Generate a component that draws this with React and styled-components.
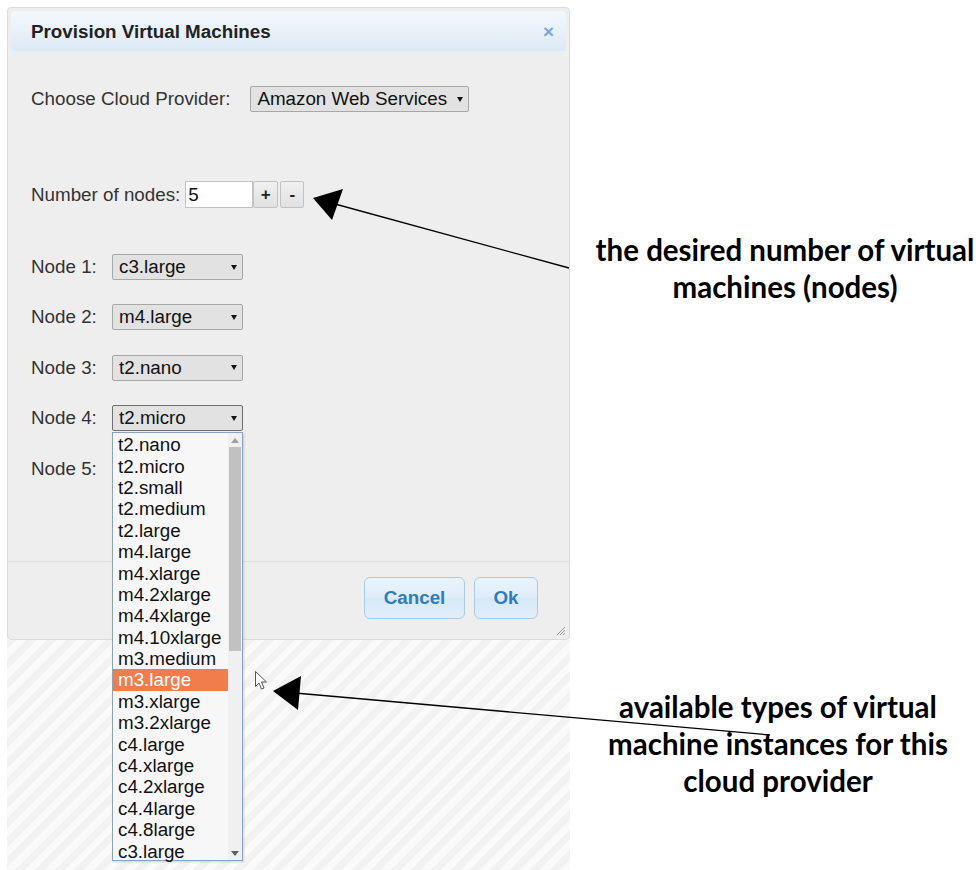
import React from "react";
import styled, { createGlobalStyle } from "styled-components";

const GlobalStyle = createGlobalStyle`
  html, body {
    margin: 0;
    padding: 0;
    background: #ffffff;
  }
  body {
    font-family: "Liberation Sans", Arial, sans-serif;
    color: #333;
  }
`;

const Page = styled.div`
  position: relative;
  display: flex;
  width: 980px;
  height: 870px;
  overflow: hidden;
`;

const LeftColumn = styled.div`
  display: flex;
  flex-direction: column;
  width: 563px;
  margin-left: 7px;
`;

const Dialog = styled.div`
  position: relative;
  box-sizing: border-box;
  display: flex;
  flex-direction: column;
  height: 633px;
  margin-top: 7px;
  border: 1px solid #dcdcdc;
  border-radius: 4px;
  background: #eeeeee;
`;

const Header = styled.div`
  display: flex;
  align-items: center;
  justify-content: space-between;
  height: 40px;
  margin: 3px 3px 0;
  padding: 1px 12px 0 20px;
  box-sizing: border-box;
  border-radius: 4px;
  background: linear-gradient(#f4f8fc, #dce9f6);
`;

const Title = styled.h1`
  margin: 0;
  font-size: 18.8px;
  font-weight: bold;
  color: #222;
`;

const Close = styled.span`
  font-size: 19px;
  font-weight: bold;
  color: #7aa6d0;
  line-height: 1;
`;

const Body = styled.div`
  flex: 1;
  display: flex;
  flex-direction: column;
  padding-left: 23px;
`;

const Row = styled.div`
  display: flex;
  align-items: center;
  margin-top: ${(p) => p.$top}px;
  gap: ${(p) => p.$gap || 0}px;
`;

const NodeRows = styled.div`
  display: flex;
  flex-direction: column;
  gap: 24.4px;
  margin-top: 46px;
`;

const Label = styled.span`
  font-size: 18.8px;
  color: #333;
  width: ${(p) => (p.$width ? `${p.$width}px` : "auto")};
  flex: none;
`;

const SelectBox = styled.div`
  position: relative;
  box-sizing: border-box;
  display: flex;
  align-items: center;
  justify-content: space-between;
  width: ${(p) => p.$width}px;
  height: 26px;
  padding: 0 5px 0 6px;
  border: 1px solid ${(p) => (p.$focused ? "#6f6f6f" : "#a7a7a7")};
  border-radius: 2px;
  background: #e2e2e2;
  font-size: 18.8px;
  color: #111;
`;

const Caret = styled.svg`
  width: 6px;
  height: 5px;
  flex: none;
`;

const NumberInput = styled.div`
  box-sizing: border-box;
  display: flex;
  align-items: center;
  width: 68px;
  height: 27px;
  padding-left: 2px;
  border: 1px solid #c4c4c4;
  background: #fff;
  font-size: 18.8px;
  color: #111;
`;

const StepButton = styled.button`
  box-sizing: border-box;
  width: ${(p) => p.$width}px;
  height: 27px;
  margin-left: ${(p) => p.$gap}px;
  padding: 0;
  border: 1px solid #c2c2c2;
  border-radius: 2px;
  background: linear-gradient(#f0f0f0, #e1e1e1);
  font-family: "Liberation Sans", Arial, sans-serif;
  font-size: 17px;
  font-weight: bold;
  color: #222;
`;

const DropList = styled.ul`
  position: absolute;
  top: 26px;
  left: -1px;
  z-index: 5;
  box-sizing: border-box;
  width: 131px;
  height: 429px;
  margin: 0;
  padding: 1px 14px 0 0;
  list-style: none;
  border: 1px solid #8aa4c0;
  background: #f7f7f7;
  box-shadow: 1px 1px 2px rgba(0, 0, 0, 0.15);
`;

const Option = styled.li`
  height: 21.4px;
  line-height: 21.4px;
  padding-left: 5px;
  font-size: 18.8px;
  color: ${(p) => (p.$active ? "#fff" : "#111")};
  background: ${(p) => (p.$active ? "#f07d4b" : "transparent")};
  white-space: nowrap;
`;

const ScrollTrack = styled.div`
  position: absolute;
  top: 0;
  right: 0;
  bottom: 0;
  width: 14px;
  display: flex;
  flex-direction: column;
  align-items: center;
  background: #f0f0f0;
`;

const ScrollArrow = styled.svg`
  width: 8px;
  height: 5px;
  margin: 5px 0 4px;
  flex: none;
`;

const ScrollThumb = styled.div`
  width: 12px;
  height: 204px;
  background: #c1c1c1;
`;

const ScrollSpacer = styled.div`
  flex: 1;
`;

const Footer = styled.div`
  display: flex;
  justify-content: flex-end;
  gap: 9px;
  height: 62px;
  padding: 15px 31px 0 0;
  border-top: 1px solid #dedede;
`;

const DialogButton = styled.button`
  box-sizing: border-box;
  width: ${(p) => p.$width}px;
  height: 42px;
  border: 1px solid #a8cbe8;
  border-radius: 6px;
  background: linear-gradient(#e9f3fb 0%, #dfedf9 50%, #d6e8f7 51%, #e2effa 100%);
  font-family: "Liberation Sans", Arial, sans-serif;
  font-size: 18.8px;
  font-weight: bold;
  color: #2f7cb8;
`;

const Grip = styled.svg`
  position: absolute;
  right: 3px;
  bottom: 3px;
  width: 12px;
  height: 12px;
`;

const Backdrop = styled.div`
  flex: 1;
  background: repeating-linear-gradient(
    135deg,
    #f2f2f2 0 7px,
    #fafafa 7px 14px
  );
`;

const Notes = styled.div`
  display: flex;
  flex-direction: column;
  align-items: center;
  width: 410px;
`;

const Note = styled.p`
  margin: ${(p) => p.$top}px 0 0;
  padding-left: ${(p) => p.$shift * 2}px;
  font-family: Lato, "Open Sans", sans-serif;
  font-weight: bold;
  font-size: 29.5px;
  line-height: 37px;
  text-align: center;
  color: #000;
  white-space: nowrap;
`;

const Overlay = styled.svg`
  position: absolute;
  inset: 0;
  width: 980px;
  height: 870px;
  pointer-events: none;
  z-index: 10;
`;

const instanceTypes = [
  "t2.nano",
  "t2.micro",
  "t2.small",
  "t2.medium",
  "t2.large",
  "m4.large",
  "m4.xlarge",
  "m4.2xlarge",
  "m4.4xlarge",
  "m4.10xlarge",
  "m3.medium",
  "m3.large",
  "m3.xlarge",
  "m3.2xlarge",
  "c4.large",
  "c4.xlarge",
  "c4.2xlarge",
  "c4.4large",
  "c4.8large",
  "c3.large",
];

const nodes = [
  { id: 1, type: "c3.large" },
  { id: 2, type: "m4.large" },
  { id: 3, type: "t2.nano" },
  { id: 4, type: "t2.micro", open: true },
  { id: 5, type: "" },
];

function CaretIcon() {
  return (
    <Caret viewBox="0 0 6 5">
      <path d="M0 0 H6 L3 5 Z" fill="#111" />
    </Caret>
  );
}

function Select({ width, value, focused, children }) {
  return (
    <SelectBox $width={width} $focused={focused}>
      <span>{value}</span>
      <CaretIcon />
      {children}
    </SelectBox>
  );
}

function InstanceList() {
  return (
    <DropList>
      {instanceTypes.map((t) => (
        <Option key={t} $active={t === "m3.large"}>
          {t}
        </Option>
      ))}
      <ScrollTrack>
        <ScrollArrow viewBox="0 0 8 5">
          <path d="M0 5 L4 0 L8 5 Z" fill="#a0a0a0" />
        </ScrollArrow>
        <ScrollThumb />
        <ScrollSpacer />
        <ScrollArrow viewBox="0 0 8 5">
          <path d="M0 0 L8 0 L4 5 Z" fill="#606060" />
        </ScrollArrow>
      </ScrollTrack>
    </DropList>
  );
}

export default function App() {
  return (
    <>
      <GlobalStyle />
      <Page>
        <LeftColumn>
          <Dialog>
            <Header>
              <Title>Provision Virtual Machines</Title>
              <Close>×</Close>
            </Header>
            <Body>
              <Row $top={35} $gap={20}>
                <Label>Choose Cloud Provider:</Label>
                <Select width={219} value="Amazon Web Services" />
              </Row>
              <Row $top={69} $gap={5}>
                <Label>Number of nodes:</Label>
                <NumberInput>5</NumberInput>
                <StepButton $width={25} $gap={-5}>+</StepButton>
                <StepButton $width={24} $gap={-3}>-</StepButton>
              </Row>
              <NodeRows>
                {nodes.map((n) => (
                  <Row key={n.id} $top={0}>
                    <Label $width={81}>Node {n.id}:</Label>
                    <Select width={131} value={n.type} focused={n.open}>
                      {n.open && <InstanceList />}
                    </Select>
                  </Row>
                ))}
              </NodeRows>
            </Body>
            <Footer>
              <DialogButton $width={101}>Cancel</DialogButton>
              <DialogButton $width={64}>Ok</DialogButton>
            </Footer>
            <Grip viewBox="0 0 12 12">
              <path
                d="M11 3 L3 11 M11 6 L6 11 M11 9 L9 11"
                stroke="#9a9a9a"
                strokeWidth="1"
              />
            </Grip>
          </Dialog>
          <Backdrop />
        </LeftColumn>
        <Notes>
          <Note $top={231} $shift={10}>
            the desired number of virtual
            <br />
            machines (nodes)
          </Note>
          <Note $top={383} $shift={3}>
            available types of virtual
            <br />
            machine instances for this
            <br />
            cloud provider
          </Note>
        </Notes>
        <Overlay viewBox="0 0 980 870">
          {/* pointer arrows from the notes to the controls */}
          <line x1="569" y1="268" x2="335" y2="204" stroke="#000" strokeWidth="1.3" />
          <path d="M313 198 L343 189 L332 220 Z" fill="#000" />
          <line x1="770" y1="735" x2="295" y2="693" stroke="#000" strokeWidth="1.3" />
          <path d="M273 691 L301 676 L298 710 Z" fill="#000" />
          {/* mouse pointer */}
          <path
            d="M255.5 671.5 L255.5 686.5 L259 683 L261.5 689 L264 688 L261.5 682 L266.5 682 Z"
            fill="#fff"
            stroke="#555"
            strokeWidth="1"
            strokeLinejoin="round"
          />
        </Overlay>
      </Page>
    </>
  );
}
